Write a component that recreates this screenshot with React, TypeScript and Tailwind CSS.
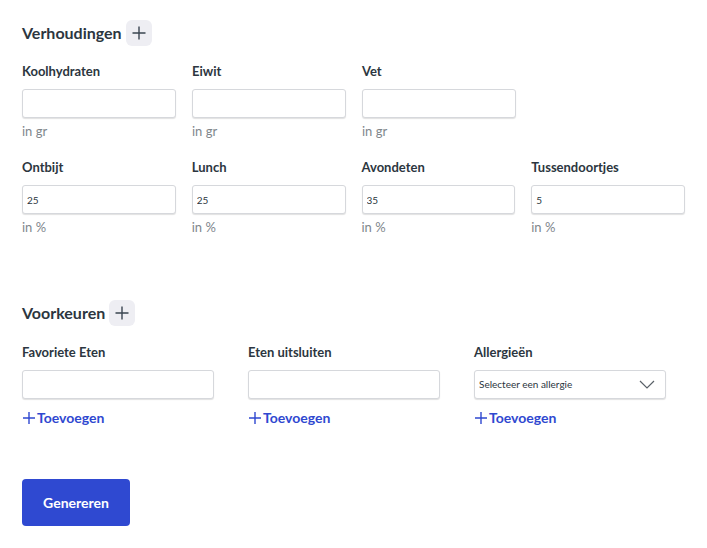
import React from 'react';

const font = { fontFamily: 'Lato, "Open Sans", sans-serif' };

const PlusButton = () => (
  <button
    type="button"
    className="ml-1 flex h-[26px] w-[26px] items-center justify-center rounded-md bg-[#eeeef3] text-[#3a4550]"
  >
    <svg width="14" height="14" viewBox="0 0 14 14" fill="none" stroke="currentColor" strokeWidth="1.4">
      <path d="M7 0.5v13M0.5 7h13" />
    </svg>
  </button>
);

const Field = ({ label, value, unit }: { label: string; value?: string; unit: string }) => (
  <div className="w-[154px]">
    <div className="h-[20px] text-[13px] font-bold leading-[20px] text-[#2c3640]">{label}</div>
    <input
      readOnly
      value={value ?? ''}
      className="mt-[8px] block h-[29px] w-full rounded-[3px] border border-[#d6d8dc] bg-white px-[4px] text-[10px] text-[#2c3640] shadow-[0_1px_1px_rgba(0,0,0,0.12)] outline-none"
    />
    <div className="mt-[5px] text-[13px] leading-[16px] text-[#80868c]">{unit}</div>
  </div>
);

const AddLink = () => (
  <div className="mt-[8px] flex items-center gap-[1px] text-[14px] font-bold text-[#2f48d0]">
    <svg width="14" height="14" viewBox="0 0 14 14" fill="none" stroke="currentColor" strokeWidth="1.4">
      <path d="M7 1v12M1 7h12" />
    </svg>
    <span>Toevoegen</span>
  </div>
);

const PrefField = ({ label, children }: { label: string; children: React.ReactNode }) => (
  <div className="w-[192px]">
    <div className="h-[20px] text-[13px] font-bold leading-[20px] text-[#2c3640]">{label}</div>
    <div className="mt-[8px]">{children}</div>
    <AddLink />
  </div>
);

const boxCls =
  'block h-[29px] w-full rounded-[3px] border border-[#d6d8dc] bg-white shadow-[0_1px_1px_rgba(0,0,0,0.12)]';

export default function App() {
  return (
    <div className="min-h-[548px] w-[707px] bg-white px-[22px] pt-[20px]" style={font}>
      <div className="flex items-center">
        <h2 className="text-[16px] font-bold text-[#2c3640]">Verhoudingen</h2>
        <PlusButton />
      </div>

      <div className="mt-[15px] flex gap-[16px]">
        <Field label="Koolhydraten" unit="in gr" />
        <Field label="Eiwit" unit="in gr" />
        <Field label="Vet" unit="in gr" />
      </div>

      <div className="mt-[18px] flex gap-[16px]">
        <Field label="Ontbijt" value="25" unit="in %" />
        <Field label="Lunch" value="25" unit="in %" />
        <Field label="Avondeten" value="35" unit="in %" />
        <Field label="Tussendoortjes" value="5" unit="in %" />
      </div>

      <div className="mt-[65px] flex items-center">
        <h2 className="text-[16px] font-bold text-[#2c3640]">Voorkeuren</h2>
        <PlusButton />
      </div>

      <div className="mt-[16px] flex gap-[34px]">
        <PrefField label="Favoriete Eten">
          <div className={boxCls} />
        </PrefField>
        <PrefField label="Eten uitsluiten">
          <div className={boxCls} />
        </PrefField>
        <PrefField label="Allergieën">
          <div className={`${boxCls} flex items-center justify-between pl-[4px] pr-[10px]`}>
            <span className="text-[10px] text-[#2c3640]">Selecteer een allergie</span>
            <svg width="16" height="9" viewBox="0 0 16 9" fill="none" stroke="#5a6168" strokeWidth="1.2">
              <path d="M1 1l7 7 7-7" />
            </svg>
          </div>
        </PrefField>
      </div>

      <button
        type="button"
        className="mt-[51px] h-[47px] w-[108px] rounded-[4px] bg-[#2f49d1] text-[14px] font-bold text-white"
      >
        Genereren
      </button>
    </div>
  );
}
